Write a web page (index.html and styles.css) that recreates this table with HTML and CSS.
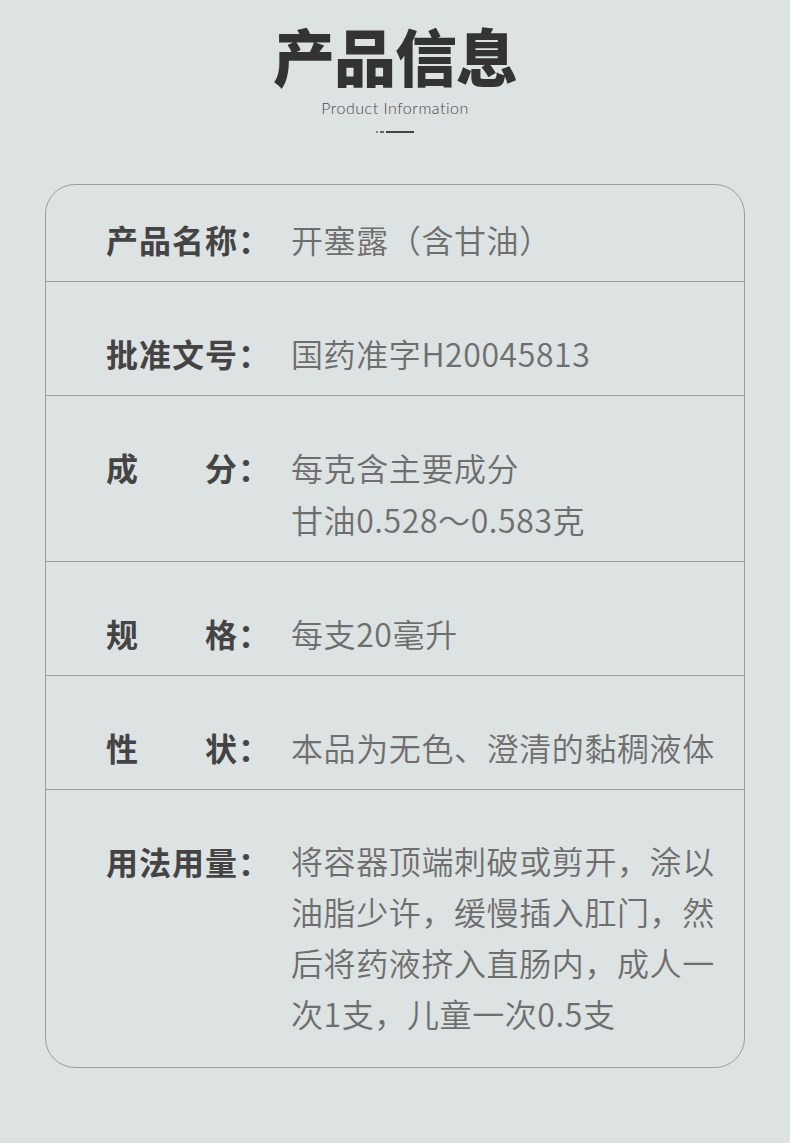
FILE: index.html
```html
<!DOCTYPE html>
<html lang="zh-CN">
<head>
<meta charset="utf-8">
<title>产品信息</title>
<link rel="stylesheet" href="styles.css">
</head>
<body>
<div class="page">
  <header class="head">
    <h1 class="title">产品信息</h1>
    <div class="subtitle">Product Information</div>
    <div class="deco"><span class="dot"></span><span class="dot dot2"></span><span class="bar"></span></div>
  </header>
  <section class="card">
    <div class="row first">
      <div class="label">产品名称：</div>
      <div class="value">开塞露（含甘油）</div>
    </div>
    <div class="row">
      <div class="label">批准文号：</div>
      <div class="value">国药准字H20045813</div>
    </div>
    <div class="row">
      <div class="label">成　　分：</div>
      <div class="value">每克含主要成分<br>甘油0.528～0.583克</div>
    </div>
    <div class="row">
      <div class="label">规　　格：</div>
      <div class="value">每支20毫升</div>
    </div>
    <div class="row">
      <div class="label">性　　状：</div>
      <div class="value">本品为无色、澄清的黏稠液体</div>
    </div>
    <div class="row last">
      <div class="label">用法用量：</div>
      <div class="value">将容器顶端刺破或剪开，涂以油脂少许，缓慢插入肛门，然后将药液挤入直肠内，成人一次1支，儿童一次0.5支</div>
    </div>
  </section>
</div>
</body>
</html>
```
FILE: styles.css
```css
html, body {
  margin: 0;
  padding: 0;
}
body {
  background: #dde2e2;
  font-family: "Noto Sans CJK SC", "Noto Sans", sans-serif;
  width: 790px;
  height: 1143px;
  overflow: hidden;
}
.page {
  display: flex;
  flex-direction: column;
  align-items: center;
  padding-top: 20px;
}
.head {
  display: flex;
  flex-direction: column;
  align-items: center;
}
.title {
  margin: 0;
  font-size: 62px;
  line-height: 70px;
  font-weight: 900;
  color: #333333;
  letter-spacing: -1px;
}
.subtitle {
  margin-top: 8px;
  font-family: "Lato", "Open Sans", sans-serif;
  font-size: 16px;
  font-weight: 300;
  line-height: 20px;
  color: #484848;
  letter-spacing: 0.5px;
}
.deco {
  display: flex;
  align-items: center;
  gap: 2px;
  margin-top: 13px;
  height: 2px;
}
.dot {
  width: 2px;
  height: 2px;
  background: #888;
}
.dot2 {
  width: 4px;
  background: #666;
}
.bar {
  width: 28px;
  height: 2px;
  background: #444;
}
.card {
  margin-top: 51px;
  width: 698px;
  border: 1px solid #95a09f;
  border-radius: 30px;
  display: flex;
  flex-direction: column;
}
.row {
  display: flex;
  padding: 45px 20px 16px 60px;
  border-top: 1px solid #95a09f;
}
.row.first {
  border-top: none;
  padding-top: 28px;
  padding-bottom: 16px;
}
.row.last {
  padding-bottom: 28px;
}
.label {
  width: 185px;
  flex: none;
  font-size: 32px;
  line-height: 52px;
  font-weight: 700;
  color: #444444;
  letter-spacing: 1px;
  white-space: nowrap;
}
.value {
  width: 432px;
  font-size: 32px;
  line-height: 52px;
  font-weight: 350;
  color: #6e6e6e;
  letter-spacing: 0.6px;
}
.row.last .value {
  line-height: 51px;
}
```
